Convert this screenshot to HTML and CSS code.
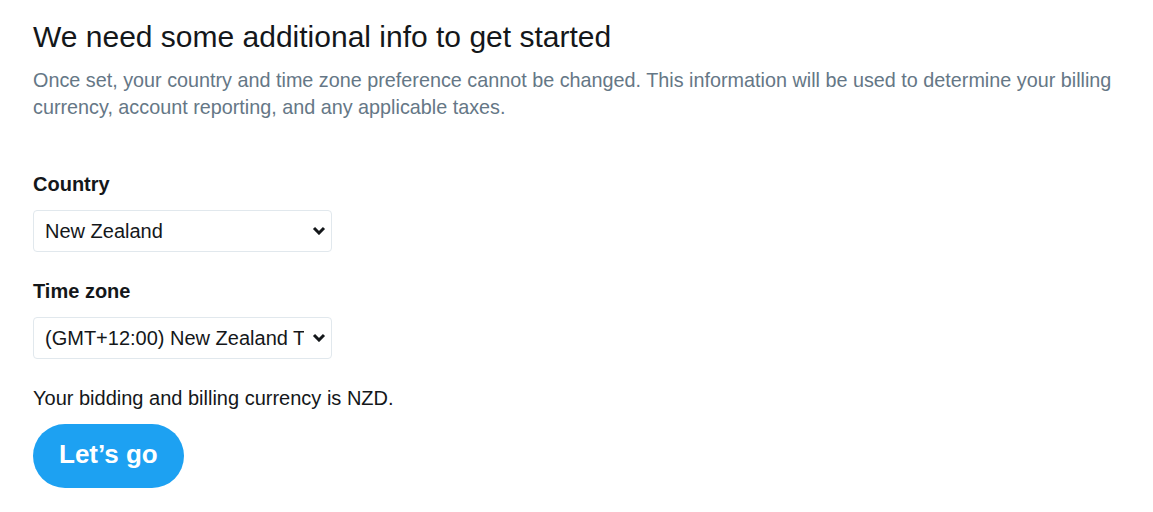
FILE: index.html
```html
<!DOCTYPE html>
<html lang="en">
<head>
  <meta charset="UTF-8" />
  <meta name="viewport" content="width=device-width, initial-scale=1.0"/>
  <title>Get started</title>
  <link rel="stylesheet" href="styles.css">
</head>
<body>
  <div class="setup-container">
    <h1>We need some additional info to get started</h1>
    <p class="intro">Once set, your country and time zone preference cannot be changed. This information will be used to determine your billing currency, account reporting, and any applicable taxes.</p>

    <form id="form-setup">
      <label for="country">Country</label>
      <div class="select-wrap">
        <select id="country" name="country">
          <option>New Zealand</option>
          <option>Australia</option>
          <option>United States</option>
        </select>
        <svg class="chevron" width="14" height="9" viewBox="0 0 14 9"><path d="M2 2l5 5 5-5" fill="none" stroke="#14171a" stroke-width="3"/></svg>
      </div>

      <label for="timezone">Time zone</label>
      <div class="select-wrap">
        <select id="timezone" name="timezone">
          <option>(GMT+12:00) New Zealand Time</option>
          <option>(GMT+10:00) Sydney</option>
        </select>
        <svg class="chevron" width="14" height="9" viewBox="0 0 14 9"><path d="M2 2l5 5 5-5" fill="none" stroke="#14171a" stroke-width="3"/></svg>
      </div>

      <p class="currency">Your bidding and billing currency is NZD.</p>
      <button type="submit">Let’s go</button>
    </form>
  </div>
</body>
</html>
```

FILE: styles.css
```css
body {
  font-family: 'Liberation Sans', Arial, sans-serif;
  background: #fff;
  color: #14171a;
  margin: 0;
}

.setup-container {
  padding: 19px 20px 19px 33px;
}

.setup-container h1 {
  font-size: 30px;
  font-weight: normal;
  line-height: 36px;
  margin: 0 0 12px;
}

.intro {
  font-size: 19.8px;
  line-height: 27px;
  color: #657786;
  margin: 0 0 51px;
}

label {
  display: block;
  font-size: 20px;
  font-weight: bold;
  line-height: 24px;
  margin-bottom: 14px;
}

.select-wrap {
  position: relative;
  width: 299px;
  margin-bottom: 27px;
}

select {
  display: block;
  width: 100%;
  height: 42px;
  padding: 0 27px 0 11px;
  border: 1px solid #e1e8ed;
  border-radius: 4px;
  background: #fff;
  color: #14171a;
  font-family: inherit;
  font-size: 20px;
  appearance: none;
  -webkit-appearance: none;
}

.chevron {
  position: absolute;
  right: 6px;
  top: 16px;
  pointer-events: none;
}

.currency {
  font-size: 20px;
  line-height: 24px;
  margin: 0 0 14px;
}

button {
  background-color: #1da1f2;
  color: #fff;
  border: none;
  border-radius: 32px;
  height: 64px;
  padding: 0 26px 3px;
  font-family: inherit;
  font-size: 26px;
  font-weight: bold;
  cursor: pointer;
}
```
